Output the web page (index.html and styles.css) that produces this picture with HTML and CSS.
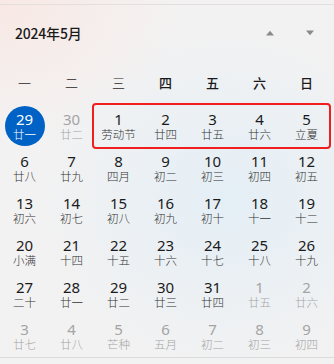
FILE: index.html
```html
<!DOCTYPE html>
<html lang="zh">
<head>
<meta charset="utf-8">
<link rel="stylesheet" href="styles.css">
</head>
<body>
<div class="panel">
  <div class="header">
    <div class="title">2024年5月</div>
    <div class="arrows">
      <svg class="arrow" width="10" height="6" viewBox="0 0 10 6"><path d="M1 5.5 L5 0.8 L9 5.5 Z" fill="#8a8a8a"/></svg>
      <svg class="arrow" width="10" height="6" viewBox="0 0 10 6"><path d="M1 0.5 L9 0.5 L5 5.2 Z" fill="#8a8a8a"/></svg>
    </div>
  </div>
  <div class="weekdays">
    <div class="wd">一</div><div class="wd">二</div><div class="wd">三</div>
    <div class="wd strong">四</div><div class="wd strong">五</div><div class="wd strong">六</div><div class="wd strong">日</div>
  </div>
  <div class="grid">
    <div class="cell selected c1"><span class="num">29</span><span class="lunar">廿一</span></div>
    <div class="cell other c2"><span class="num">30</span><span class="lunar">廿二</span></div>
    <div class="cell c3"><span class="num">1</span><span class="lunar">劳动节</span></div>
    <div class="cell c4"><span class="num">2</span><span class="lunar">廿四</span></div>
    <div class="cell c5"><span class="num">3</span><span class="lunar">廿五</span></div>
    <div class="cell c6"><span class="num">4</span><span class="lunar">廿六</span></div>
    <div class="cell c7"><span class="num">5</span><span class="lunar">立夏</span></div>
    <div class="highlight"></div>

    <div class="cell"><span class="num">6</span><span class="lunar">廿八</span></div>
    <div class="cell"><span class="num">7</span><span class="lunar">廿九</span></div>
    <div class="cell"><span class="num">8</span><span class="lunar">四月</span></div>
    <div class="cell"><span class="num">9</span><span class="lunar">初二</span></div>
    <div class="cell"><span class="num">10</span><span class="lunar">初三</span></div>
    <div class="cell"><span class="num">11</span><span class="lunar">初四</span></div>
    <div class="cell"><span class="num">12</span><span class="lunar">初五</span></div>

    <div class="cell"><span class="num">13</span><span class="lunar">初六</span></div>
    <div class="cell"><span class="num">14</span><span class="lunar">初七</span></div>
    <div class="cell"><span class="num">15</span><span class="lunar">初八</span></div>
    <div class="cell"><span class="num">16</span><span class="lunar">初九</span></div>
    <div class="cell"><span class="num">17</span><span class="lunar">初十</span></div>
    <div class="cell"><span class="num">18</span><span class="lunar">十一</span></div>
    <div class="cell"><span class="num">19</span><span class="lunar">十二</span></div>

    <div class="cell"><span class="num">20</span><span class="lunar">小满</span></div>
    <div class="cell"><span class="num">21</span><span class="lunar">十四</span></div>
    <div class="cell"><span class="num">22</span><span class="lunar">十五</span></div>
    <div class="cell"><span class="num">23</span><span class="lunar">十六</span></div>
    <div class="cell"><span class="num">24</span><span class="lunar">十七</span></div>
    <div class="cell"><span class="num">25</span><span class="lunar">十八</span></div>
    <div class="cell"><span class="num">26</span><span class="lunar">十九</span></div>

    <div class="cell"><span class="num">27</span><span class="lunar">二十</span></div>
    <div class="cell"><span class="num">28</span><span class="lunar">廿一</span></div>
    <div class="cell"><span class="num">29</span><span class="lunar">廿二</span></div>
    <div class="cell"><span class="num">30</span><span class="lunar">廿三</span></div>
    <div class="cell"><span class="num">31</span><span class="lunar">廿四</span></div>
    <div class="cell other"><span class="num">1</span><span class="lunar">廿五</span></div>
    <div class="cell other"><span class="num">2</span><span class="lunar">廿六</span></div>

    <div class="cell other"><span class="num">3</span><span class="lunar">廿七</span></div>
    <div class="cell other"><span class="num">4</span><span class="lunar">廿八</span></div>
    <div class="cell other"><span class="num">5</span><span class="lunar">芒种</span></div>
    <div class="cell other"><span class="num">6</span><span class="lunar">五月</span></div>
    <div class="cell other"><span class="num">7</span><span class="lunar">初二</span></div>
    <div class="cell other"><span class="num">8</span><span class="lunar">初三</span></div>
    <div class="cell other"><span class="num">9</span><span class="lunar">初四</span></div>
  </div>
</div>
</body>
</html>
```

FILE: styles.css
```css
html, body {
  margin: 0;
  padding: 0;
}
body {
  width: 334px;
  height: 364px;
  overflow: hidden;
  font-family: "Noto Sans", "Noto Sans CJK SC", sans-serif;
  color: #1b1b1b;
  background:
    radial-gradient(ellipse 180px 140px at 0px 0px, rgba(250, 228, 222, 0.7), rgba(250, 228, 222, 0) 100%),
    radial-gradient(ellipse 200px 180px at 230px 200px, rgba(226, 238, 246, 0.9), rgba(226, 238, 246, 0) 100%),
    #f3f2f2;
}
.panel {
  margin-top: 4px;
  border-top: 1px solid #e4dedd;
  border-bottom: 1px solid #dcdcdc;
  padding: 0 4px 0 1px;
}
.header {
  height: 56px;
  display: flex;
  align-items: center;
  justify-content: space-between;
  padding-left: 14px;
}
.title {
  font-family: "Noto Sans CJK SC", sans-serif;
  font-size: 14px;
  font-weight: 500;
  color: #1a1a1a;
  letter-spacing: -0.2px;
}
.arrows {
  display: flex;
  gap: 30px;
  padding-right: 15px;
}
.arrow {
  display: block;
}
.weekdays {
  display: grid;
  grid-template-columns: repeat(7, 47px);
  height: 44px;
  align-items: center;
}
.wd {
  text-align: center;
  font-family: "Noto Sans CJK SC", sans-serif;
  font-size: 13px;
  font-weight: 300;
  color: #2a2a2a;
  padding-bottom: 2px;
}
.wd.strong {
  font-weight: 500;
  color: #1a1a1a;
}
.grid {
  display: grid;
  grid-template-columns: repeat(7, 47px);
  grid-auto-rows: 42px;
}
.cell {
  display: flex;
  flex-direction: column;
  align-items: center;
  justify-content: center;
}
.num {
  display: block;
  font-size: 15px;
  line-height: 16px;
  height: 16px;
  color: #1b1b1b;
}
.lunar {
  display: block;
  font-family: "Noto Sans CJK SC", sans-serif;
  font-size: 11.5px;
  line-height: 14px;
  height: 14px;
  font-weight: 300;
  color: #333333;
}
.other .num, .other .lunar {
  color: #a4a4a4;
}
.cell.selected {
  position: relative;
}
.selected .num, .selected .lunar {
  color: #ffffff;
  position: relative;
}
.selected::before {
  content: "";
  position: absolute;
  width: 40px;
  height: 40px;
  border-radius: 50%;
  background: #0062c4;
}
.highlight {
  grid-column: 3 / 8;
  grid-row: 1;
  margin: -2px -1px -2px -3px;
  border: 2px solid #f21d1d;
  border-radius: 4px;
  pointer-events: none;
}
.c1 { grid-row: 1; grid-column: 1; }
.c2 { grid-row: 1; grid-column: 2; }
.c3 { grid-row: 1; grid-column: 3; }
.c4 { grid-row: 1; grid-column: 4; }
.c5 { grid-row: 1; grid-column: 5; }
.c6 { grid-row: 1; grid-column: 6; }
.c7 { grid-row: 1; grid-column: 7; }
```
